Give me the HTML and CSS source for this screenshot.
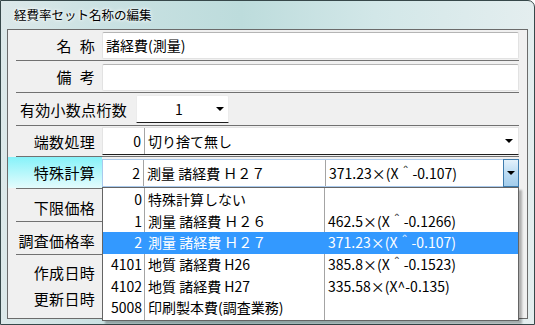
FILE: index.html
```html
<!DOCTYPE html>
<html lang="ja">
<head>
    <meta charset="UTF-8">
    <title>経費率セット名称の編集</title>
    <link rel="stylesheet" href="styles.css">
</head>
<body>
    <div class="window">
        <div class="titlebar">経費率セット名称の編集</div>

        <div class="client">
            <div class="row r1">
                <div class="label">名<span class="sp"></span>称</div>
                <div class="field"><div class="textbox">諸経費(測量)</div></div>
            </div>
            <div class="row r2">
                <div class="label">備<span class="sp"></span>考</div>
                <div class="field"><div class="textbox"></div></div>
            </div>
            <div class="row r3">
                <div class="label wide">有効小数点桁数</div>
                <div class="field">
                    <div class="small-combo">
                        <span class="value">1</span>
                        <span class="arrow"></span>
                    </div>
                </div>
            </div>
            <div class="row r4">
                <div class="label">端数処理</div>
                <div class="field">
                    <div class="combo">
                        <span class="num">0</span>
                        <span class="name">切り捨て無し</span>
                        <span class="arrow"></span>
                    </div>
                </div>
            </div>
            <div class="row r5">
                <div class="label active">特殊計算</div>
                <div class="field">
                    <div class="combo open">
                        <span class="num">2</span>
                        <span class="name">測量 諸経費 Ｈ２７</span>
                        <span class="formula">371.23×(X＾-0.107)</span>
                        <span class="drop-btn"><span class="arrow"></span></span>
                    </div>
                </div>
            </div>
            <div class="row r6">
                <div class="label">下限価格</div>
                <div class="field"></div>
            </div>
            <div class="row r7">
                <div class="label">調査価格率</div>
                <div class="field"></div>
            </div>
            <div class="dates">
                <div class="label">作成日時</div>
                <div class="label">更新日時</div>
            </div>
        </div>

        <div class="dropdown" id="dropList"></div>
    </div>

    <script>
        const items = [
            { num: "0", name: "特殊計算しない", formula: "" },
            { num: "1", name: "測量 諸経費 Ｈ２６", formula: "462.5×(X＾-0.1266)" },
            { num: "2", name: "測量 諸経費 Ｈ２７", formula: "371.23×(X＾-0.107)" },
            { num: "4101", name: "地質 諸経費 H26", formula: "385.8×(X＾-0.1523)" },
            { num: "4102", name: "地質 諸経費 H27", formula: "335.58×(X^-0.135)" },
            { num: "5008", name: "印刷製本費(調査業務)", formula: "" }
        ];

        const list = document.getElementById('dropList');
        items.forEach(item => {
            const row = document.createElement('div');
            row.className = item.num === "2" ? 'item selected' : 'item';
            row.innerHTML = `
                <span class="num">${item.num}</span>
                <span class="name">${item.name}</span>
                <span class="formula">${item.formula}</span>
            `;
            list.appendChild(row);
        });
    </script>
</body>
</html>
```

FILE: styles.css
```css
* {
    margin: 0;
    padding: 0;
    box-sizing: border-box;
}

body {
    font-family: "Noto Sans CJK JP", sans-serif;
    color: #000;
    background: #fff;
}

.window {
    position: relative;
    width: 535px;
    height: 325px;
    border: 1px solid #37484a;
    border-radius: 0 7px 0 0;
    background: linear-gradient(to right, #dce8e9 0%, #c9e1e2 20%, #bddcdc 45%, #d2e7e8 70%, #e4eeef 100%);
    padding: 0 6px 0 6px;
}

.titlebar {
    height: 28px;
    padding-left: 7px;
    font-size: 12.5px;
    line-height: 27px;
    text-shadow: 0 0 5px #fff, 0 0 3px #fff;
}

.client {
    height: 290px;
    background-color: #f0f0f0;
    border: 1px solid #6b6b6b;
}

.row {
    display: flex;
    margin: 0 8px;
    border-bottom: 1px solid #717171;
}

.r1 { height: 31px; }
.r2 { height: 32px; }
.r3 { height: 33px; }
.r4 { height: 31px; }
.r5 { height: 32px; }
.r6 { height: 33px; }
.r7 { height: 33px; }

.label {
    flex: none;
    width: 94px;
    margin-left: -8px;
    padding-right: 7px;
    display: flex;
    align-items: center;
    justify-content: flex-end;
    font-size: 15px;
    letter-spacing: 0.3px;
    white-space: nowrap;
}

.label .sp {
    display: inline-block;
    width: 8px;
}

.label.wide {
    width: 120px;
    padding-right: 1px;
}

.label.active {
    background: linear-gradient(#86f2f9, #e4fcfd);
}

.r6 .label,
.r7 .label {
    padding-top: 4px;
}

.field {
    flex: 1;
    font-size: 14px;
}

.r1 .field { padding-top: 2px; }
.r2 .field { padding-top: 3px; }
.r3 .field { padding-top: 2px; }
.r4 .field { padding-top: 1px; }
.r5 .field { padding-top: 2px; }

.textbox {
    height: 27px;
    background: #fff;
    border: 1px solid #e2e2e2;
    border-top-color: #b5b5b5;
    border-radius: 2px;
    padding-left: 3px;
    line-height: 25px;
}

.small-combo {
    display: flex;
    align-items: center;
    margin-left: 8px;
    width: 93px;
    height: 28px;
    background: #fff;
    border: 1px solid #ececec;
    border-bottom: 1px solid #1e1e1e;
    border-radius: 2px 2px 0 0;
}

.small-combo .value {
    flex: 1;
    text-align: center;
    padding-left: 5px;
}

.small-combo .arrow {
    margin-right: 4px;
}

.arrow {
    display: inline-block;
    width: 0;
    height: 0;
    border-left: 4px solid transparent;
    border-right: 4px solid transparent;
    border-top: 4px solid #000;
}

.combo {
    display: flex;
    align-items: stretch;
    height: 28px;
    background: #fff;
    border: 1px solid #e4e4e4;
    border-bottom: 1px solid #1e1e1e;
    line-height: 26px;
}

.combo .num {
    width: 42px;
    text-align: right;
    padding-right: 3px;
    border-right: 1px solid #a4a4a4;
}

.combo .name {
    flex: 1;
    padding-left: 3px;
}

.r4 .combo .arrow {
    align-self: center;
    margin-right: 5px;
}

.combo.open {
    border: 1px solid #a9c9ec;
    border-bottom-color: #a9c9ec;
}

.combo.open .num {
    width: 41px;
}

.combo.open .name {
    flex: none;
    width: 182px;
    border-right: 1px solid #a4a4a4;
}

.combo.open .formula {
    flex: 1;
    padding-left: 3px;
}

.drop-btn {
    width: 16px;
    display: flex;
    align-items: center;
    justify-content: center;
    background: linear-gradient(#e3f1fb, #bcdcf3 50%, #a3cdec);
    border: 1px solid #3d7bad;
    margin: -1px -1px -1px 0;
}

.dates {
    padding-top: 4px;
}

.dates .label {
    width: 94px;
    margin-left: 0;
    height: 26px;
}

.dropdown {
    position: absolute;
    left: 101px;
    top: 186px;
    width: 417px;
    height: 134px;
    background: #fff;
    border: 1px solid #646464;
    box-shadow: 3px 3px 2px rgba(0, 0, 0, 0.28);
    background-image: linear-gradient(#a4a4a4, #a4a4a4), linear-gradient(#a4a4a4, #a4a4a4);
    background-size: 1px 100%, 1px 100%;
    background-position: 41px 0, 221px 0;
    background-repeat: no-repeat;
    padding-top: 1px;
    font-size: 14px;
}

.item {
    display: flex;
    height: 21.7px;
    line-height: 21px;
}

.item .num {
    width: 42px;
    text-align: right;
    padding-right: 3px;
}

.item .name {
    width: 180px;
    padding-left: 3px;
}

.item .formula {
    flex: 1;
    padding-left: 3px;
}

.item.selected {
    background-color: #3399ff;
    color: #fff;
}
```
